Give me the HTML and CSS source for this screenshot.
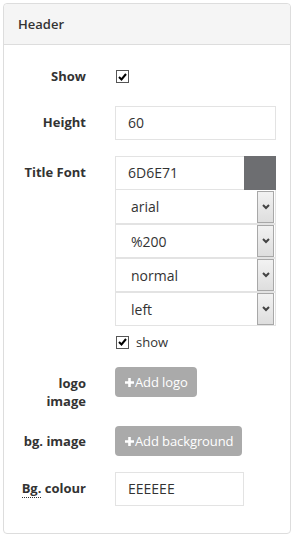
FILE: index.html
```html
<!DOCTYPE html>
<html lang="en">
<head>
    <meta charset="utf-8">
    <meta name="viewport" content="width=device-width, initial-scale=1.0">
    <title>Header settings</title>
    <link rel="stylesheet" href="styles.css">
</head>
<body>
    <div class="panel">
        <div class="panel-heading">Header</div>
        <div class="panel-body">
            <div class="form-row row-show">
                <label class="form-label">Show</label>
                <div class="form-field">
                    <span class="check"><svg width="9" height="8" viewBox="0 0 9 8"><path d="M1 4 L3.5 6.5 L8 1" fill="none" stroke="#000" stroke-width="2"/></svg></span>
                </div>
            </div>
            <div class="form-row">
                <label class="form-label">Height</label>
                <div class="form-field">
                    <div class="text-input">60</div>
                </div>
            </div>
            <div class="form-row">
                <label class="form-label">Title Font</label>
                <div class="form-field">
                    <div class="color-group">
                        <div class="text-input color-input">6D6E71</div>
                        <div class="swatch"></div>
                    </div>
                    <div class="select"><span>arial</span><span class="select-btn"><svg width="8" height="6" viewBox="0 0 8 6"><path d="M1 1 L4 4 L7 1" fill="none" stroke="#444" stroke-width="2"/></svg></span></div>
                    <div class="select"><span>%200</span><span class="select-btn"><svg width="8" height="6" viewBox="0 0 8 6"><path d="M1 1 L4 4 L7 1" fill="none" stroke="#444" stroke-width="2"/></svg></span></div>
                    <div class="select"><span>normal</span><span class="select-btn"><svg width="8" height="6" viewBox="0 0 8 6"><path d="M1 1 L4 4 L7 1" fill="none" stroke="#444" stroke-width="2"/></svg></span></div>
                    <div class="select"><span>left</span><span class="select-btn"><svg width="8" height="6" viewBox="0 0 8 6"><path d="M1 1 L4 4 L7 1" fill="none" stroke="#444" stroke-width="2"/></svg></span></div>
                    <div class="check-line">
                        <span class="check"><svg width="9" height="8" viewBox="0 0 9 8"><path d="M1 4 L3.5 6.5 L8 1" fill="none" stroke="#000" stroke-width="2"/></svg></span>
                        <span>show</span>
                    </div>
                </div>
            </div>
            <div class="form-row">
                <label class="form-label">logo<br>image</label>
                <div class="form-field">
                    <button class="btn"><svg class="plus" width="9" height="9" viewBox="0 0 9 9"><path d="M4.5 0 V9 M0 4.5 H9" stroke="#fff" stroke-width="2.6"/></svg>Add logo</button>
                </div>
            </div>
            <div class="form-row row-bg">
                <label class="form-label">bg. image</label>
                <div class="form-field">
                    <button class="btn"><svg class="plus" width="9" height="9" viewBox="0 0 9 9"><path d="M4.5 0 V9 M0 4.5 H9" stroke="#fff" stroke-width="2.6"/></svg>Add background</button>
                </div>
            </div>
            <div class="form-row">
                <label class="form-label"><abbr title="Background">Bg.</abbr> colour</label>
                <div class="form-field">
                    <div class="text-input short">EEEEEE</div>
                </div>
            </div>
        </div>
    </div>
</body>
</html>
```

FILE: styles.css
```css
body {
    font-family: "Open Sans", "Liberation Sans", sans-serif;
    font-size: 13px;
    color: #333;
    margin: 0;
    padding: 3px 6px 0 3px;
}

.panel {
    border: 1px solid #ddd;
    border-radius: 4px;
    height: 531px;
    box-sizing: border-box;
}

.panel-heading {
    background-color: #f5f5f5;
    border-bottom: 1px solid #ddd;
    border-radius: 4px 4px 0 0;
    height: 40px;
    line-height: 40px;
    padding-left: 14px;
    font-weight: 600;
}

.panel-body {
    padding: 15px 14px 0 0;
}

.form-row {
    display: grid;
    grid-template-columns: 82px 1fr;
    column-gap: 29px;
    margin-bottom: 16px;
}

.row-show {
    height: 30px;
}

.form-label {
    text-align: right;
    font-weight: 700;
    line-height: 18px;
    padding-top: 7px;
}

.row-bg .form-label {
    padding-top: 6px;
}

abbr {
    text-decoration: none;
    border-bottom: 1px dotted #333;
}

.check {
    display: inline-flex;
    align-items: center;
    justify-content: center;
    width: 11px;
    height: 11px;
    border: 1px solid #555;
    background: #fff;
}

.row-show .check {
    margin: 10px 0 0 1px;
}

.text-input {
    height: 34px;
    box-sizing: border-box;
    border: 1px solid #e3e3e3;
    padding: 0 12px;
    line-height: 32px;
    font-size: 14px;
}

.text-input.short {
    width: 129px;
}

.color-group {
    display: flex;
}

.color-input {
    flex: 1;
    border-right: none;
}

.swatch {
    width: 32px;
    height: 34px;
    background-color: #6d6e71;
}

.select {
    display: flex;
    justify-content: space-between;
    align-items: center;
    height: 34px;
    box-sizing: border-box;
    border: 1px solid #e3e3e3;
    border-top: none;
    padding-left: 15px;
    font-size: 14px;
}

.select + .select {
    border-top: 1px solid #e3e3e3;
}

.select-btn {
    display: flex;
    align-items: center;
    justify-content: center;
    width: 15px;
    height: 30px;
    margin-right: 1px;
    border: 1px solid #a8a8a8;
    background: linear-gradient(#f2f2f2, #dedede);
}

.check-line {
    display: flex;
    align-items: center;
    gap: 7px;
    margin-top: 7px;
    padding-left: 1px;
}

.btn {
    display: inline-flex;
    align-items: center;
    font-family: inherit;
    font-size: 13px;
    color: #fff;
    background-color: #aaa;
    border: none;
    border-radius: 4px;
    height: 30px;
    padding: 0 9px 0 10px;
    letter-spacing: -0.1px;
}

.plus {
    margin-right: 1px;
}
```
